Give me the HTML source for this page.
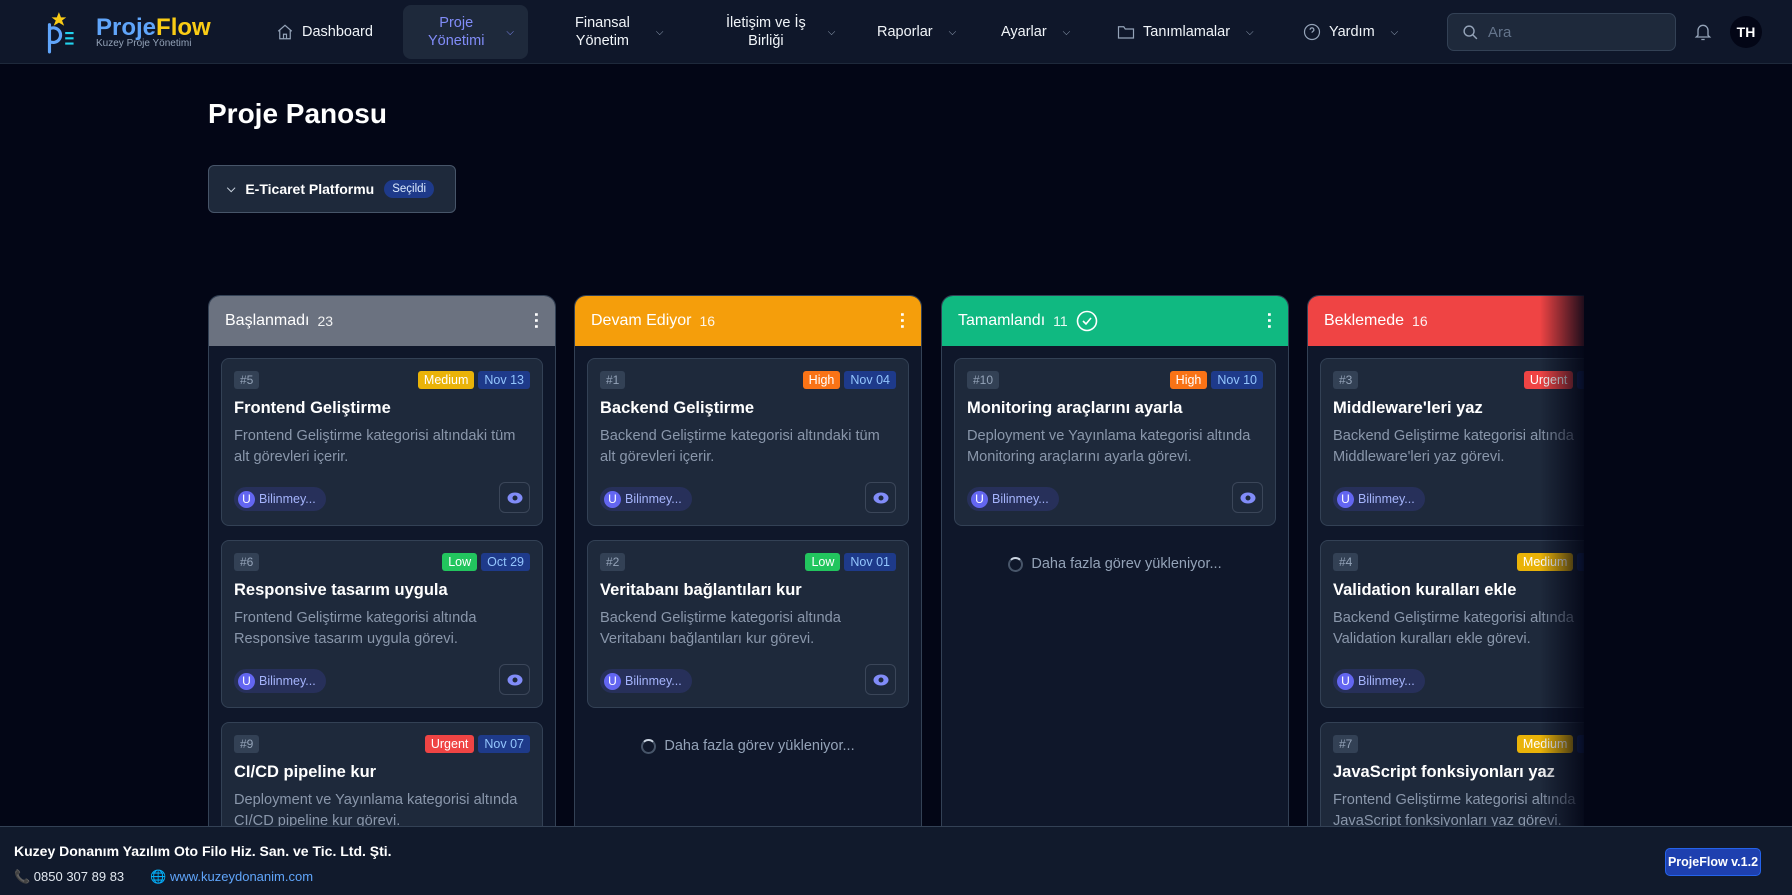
<!DOCTYPE html>
<html><head><meta charset="utf-8"><style>
*{box-sizing:border-box;margin:0;padding:0}
body{width:1792px;height:895px;overflow:hidden;background:#030616;font-family:"Liberation Sans","DejaVu Sans",sans-serif;color:#e5e7eb;position:relative}
.nav{position:absolute;left:0;top:0;width:1792px;height:64px;background:#0f172a;border-bottom:1px solid #1e293b}
.ni{position:absolute;top:0;height:64px;display:flex;align-items:center;font-size:14.5px;color:#f1f5f9;gap:8px}
.two{text-align:center;line-height:18px}
.title{position:absolute;left:208px;top:98px;font-size:28px;font-weight:bold;color:#fff}
.dd{position:absolute;left:208px;top:165px;width:248px;height:48px;border:1px solid #475569;border-radius:6px;background:#1e293b;display:flex;align-items:center;padding-left:18px;gap:10px;font-size:14px;font-weight:bold;color:#fff}
.sel{background:#1e3a8a;color:#dbeafe;font-size:11.5px;padding:3px 8px;border-radius:10px;font-weight:normal}
.board{position:absolute;left:208px;top:295px;width:1376px;height:540px;overflow:hidden}
.col{position:absolute;top:0;width:348px;height:560px;background:#0f172a;border:1px solid #334155;border-radius:12px 12px 0 0;overflow:hidden}
.ch{height:50px;display:flex;align-items:center;padding:0 16px;font-size:16px;color:#fff;gap:8px}
.ch .n{font-size:14px;opacity:.9}
.dots{margin-left:auto;font-size:18px;font-weight:bold;line-height:6px;writing-mode:vertical-lr}
.card{margin:12px 12px 0;height:168px;background:#1e293b;border:1px solid #334155;border-radius:8px;padding:12px 12px;position:relative}
.card+.card{margin-top:14px}
.id{display:inline-block;background:#334155;color:#94a3b8;font-size:12px;padding:2px 6px;border-radius:3px}
.tags{position:absolute;right:12px;top:12px;display:flex;gap:4px}
.tg{font-size:12.5px;padding:2px 6px;border-radius:3px;color:#fff}
.dt{background:#1e3a8a;color:#93c5fd}
.ct{font-size:16.5px;font-weight:bold;color:#fff;margin-top:10px}
.cd{font-size:14.6px;color:#8a97ab;line-height:21px;margin-top:8px;height:42px}
.us{position:absolute;left:12px;bottom:14px;background:#27305a;border-radius:12px;height:24px;padding:0 10px 0 4px;display:flex;align-items:center;gap:4px;font-size:12.5px;color:#a5b4fc}
.us b{width:17px;height:17px;border-radius:50%;background:#6366f1;color:#fff;font-size:12px;display:flex;align-items:center;justify-content:center;font-weight:normal}
.eye{position:absolute;right:12px;bottom:12px;width:31px;height:31px;border:1px solid #3b4659;border-radius:6px;display:flex;align-items:center;justify-content:center}
.load{text-align:center;margin-top:30px;font-size:14.5px;color:#94a3b8;display:flex;justify-content:center;align-items:center;gap:8px}
.spin{width:15px;height:15px;border:2px solid #475569;border-top-color:#cbd5e1;border-radius:50%}
.fade{position:absolute;left:1540px;top:295px;width:50px;height:540px;background:linear-gradient(90deg,rgba(3,6,22,0),#030616)}
.foot{position:absolute;left:0;top:826px;width:1792px;height:69px;background:#111a2c;border-top:1px solid #334155}
</style></head><body>
<div class="nav">
 <div class="ni" style="left:44px;gap:12px">
  <svg width="34" height="44" viewBox="0 0 30 42"><polygon points="13,2 15,7 20,7 16,10 18,15 13,12 8,15 10,10 6,7 11,7" fill="#facc15"/><path d="M4 14v26M4 18a7 7 0 1 1 0 12" stroke="#60a5fa" stroke-width="3" fill="none" stroke-linecap="round"/><path d="M19 22h8M19 27h8M19 32h8" stroke="#22d3ee" stroke-width="2"/></svg>
  <div style="margin-left:6px"><div style="font-size:24px;font-weight:bold;line-height:25px"><span style="color:#60a5fa">Proje</span><span style="color:#facc15">Flow</span></div><div style="font-size:10px;color:#94a3b8;margin-top:-2px">Kuzey Proje Yönetimi</div></div>
 </div>
 <div class="ni" style="left:276px"><svg width="18" height="18" viewBox="0 0 24 24" fill="none" stroke="#94a3b8" stroke-width="1.6"><path d="M3 11l9-8 9 8M5 9v12h14V9M10 21v-6h4v6"/></svg>Dashboard</div>
 <div style="position:absolute;left:403px;top:5px;width:125px;height:54px;background:#1e293b;border-radius:8px"></div>
 <div class="ni" style="left:428px;color:#818cf8"><div class="two">Proje<br>Yönetimi</div><span style="margin-left:14px;font-size:10px">⌵</span></div>
 <div class="ni" style="left:575px"><div class="two">Finansal<br>Yönetim</div><span style="margin-left:18px;color:#94a3b8;font-size:10px">⌵</span></div>
 <div class="ni" style="left:726px"><div class="two">İletişim ve İş<br>Birliği</div><span style="margin-left:14px;color:#94a3b8;font-size:10px">⌵</span></div>
 <div class="ni" style="left:877px">Raporlar<span style="margin-left:8px;color:#94a3b8;font-size:10px">⌵</span></div>
 <div class="ni" style="left:1001px">Ayarlar<span style="margin-left:8px;color:#94a3b8;font-size:10px">⌵</span></div>
 <div class="ni" style="left:1117px"><svg width="18" height="16" viewBox="0 0 24 20" fill="none" stroke="#94a3b8" stroke-width="1.6"><path d="M2 3h7l2 3h11v12H2z"/></svg>Tanımlamalar<span style="margin-left:8px;color:#94a3b8;font-size:10px">⌵</span></div>
 <div class="ni" style="left:1303px"><svg width="18" height="18" viewBox="0 0 24 24" fill="none" stroke="#94a3b8" stroke-width="1.6"><circle cx="12" cy="12" r="10"/><path d="M9.5 9a2.5 2.5 0 1 1 3.5 2.3c-.7.4-1 1-1 1.7M12 17h.01"/></svg>Yardım<span style="margin-left:8px;color:#94a3b8;font-size:10px">⌵</span></div>
 <div style="position:absolute;left:1447px;top:13px;width:229px;height:38px;border:1px solid #334155;border-radius:7px;background:#1e293b;display:flex;align-items:center;padding-left:14px;gap:9px;color:#64748b;font-size:15px"><svg width="17" height="17" viewBox="0 0 24 24" fill="none" stroke="#94a3b8" stroke-width="2"><circle cx="10" cy="10" r="7"/><path d="M15 15l6 6"/></svg>Ara</div>
 <svg style="position:absolute;left:1693px;top:22px" width="20" height="20" viewBox="0 0 24 24" fill="none" stroke="#94a3b8" stroke-width="1.6"><path d="M6 16V10a6 6 0 0 1 12 0v6l2 2H4zM10 21h4"/></svg>
 <div style="position:absolute;left:1730px;top:16px;width:32px;height:32px;border-radius:50%;background:#030616;color:#fff;font-size:14px;font-weight:bold;display:flex;align-items:center;justify-content:center">TH</div>
</div>
<div class="title">Proje Panosu</div>
<div class="dd"><span style="font-size:11px;color:#cbd5e1">⌵</span>E-Ticaret Platformu<span class="sel">Seçildi</span></div>
<div class="board">
 <div class="col" style="left:0"><div class="ch" style="background:#6b7280">Başlanmadı <span class="n">23</span><span class="dots">···</span></div>
  <div class="card"><span class="id">#5</span><div class="tags"><span class="tg" style="background:#eab308">Medium</span><span class="tg dt">Nov 13</span></div><div class="ct">Frontend Geliştirme</div><div class="cd">Frontend Geliştirme kategorisi altındaki tüm alt görevleri içerir.</div><div class="us"><b>U</b>Bilinmey...</div><div class="eye"><svg width="16" height="12" viewBox="0 0 16 12"><ellipse cx="8" cy="6" rx="7.5" ry="5.5" fill="#818cf8"/><circle cx="8" cy="6" r="2.5" fill="#1e293b"/></svg></div></div>
  <div class="card"><span class="id">#6</span><div class="tags"><span class="tg" style="background:#22c55e">Low</span><span class="tg dt">Oct 29</span></div><div class="ct">Responsive tasarım uygula</div><div class="cd">Frontend Geliştirme kategorisi altında Responsive tasarım uygula görevi.</div><div class="us"><b>U</b>Bilinmey...</div><div class="eye"><svg width="16" height="12" viewBox="0 0 16 12"><ellipse cx="8" cy="6" rx="7.5" ry="5.5" fill="#818cf8"/><circle cx="8" cy="6" r="2.5" fill="#1e293b"/></svg></div></div>
  <div class="card"><span class="id">#9</span><div class="tags"><span class="tg" style="background:#ef4444">Urgent</span><span class="tg dt">Nov 07</span></div><div class="ct">CI/CD pipeline kur</div><div class="cd">Deployment ve Yayınlama kategorisi altında CI/CD pipeline kur görevi.</div></div>
 </div>
 <div class="col" style="left:366px"><div class="ch" style="background:#f59e0b">Devam Ediyor <span class="n">16</span><span class="dots">···</span></div>
  <div class="card"><span class="id">#1</span><div class="tags"><span class="tg" style="background:#f97316">High</span><span class="tg dt">Nov 04</span></div><div class="ct">Backend Geliştirme</div><div class="cd">Backend Geliştirme kategorisi altındaki tüm alt görevleri içerir.</div><div class="us"><b>U</b>Bilinmey...</div><div class="eye"><svg width="16" height="12" viewBox="0 0 16 12"><ellipse cx="8" cy="6" rx="7.5" ry="5.5" fill="#818cf8"/><circle cx="8" cy="6" r="2.5" fill="#1e293b"/></svg></div></div>
  <div class="card"><span class="id">#2</span><div class="tags"><span class="tg" style="background:#22c55e">Low</span><span class="tg dt">Nov 01</span></div><div class="ct">Veritabanı bağlantıları kur</div><div class="cd">Backend Geliştirme kategorisi altında Veritabanı bağlantıları kur görevi.</div><div class="us"><b>U</b>Bilinmey...</div><div class="eye"><svg width="16" height="12" viewBox="0 0 16 12"><ellipse cx="8" cy="6" rx="7.5" ry="5.5" fill="#818cf8"/><circle cx="8" cy="6" r="2.5" fill="#1e293b"/></svg></div></div>
  <div class="load"><span class="spin"></span>Daha fazla görev yükleniyor...</div>
 </div>
 <div class="col" style="left:733px"><div class="ch" style="background:#10b981">Tamamlandı <span class="n">11</span><svg width="22" height="22" viewBox="0 0 22 22" fill="none" stroke="#fff" stroke-width="1.6"><circle cx="11" cy="11" r="9.5"/><path d="M7 11l3 3 5-6"/></svg><span class="dots">···</span></div>
  <div class="card"><span class="id">#10</span><div class="tags"><span class="tg" style="background:#f97316">High</span><span class="tg dt">Nov 10</span></div><div class="ct">Monitoring araçlarını ayarla</div><div class="cd">Deployment ve Yayınlama kategorisi altında Monitoring araçlarını ayarla görevi.</div><div class="us"><b>U</b>Bilinmey...</div><div class="eye"><svg width="16" height="12" viewBox="0 0 16 12"><ellipse cx="8" cy="6" rx="7.5" ry="5.5" fill="#818cf8"/><circle cx="8" cy="6" r="2.5" fill="#1e293b"/></svg></div></div>
  <div class="load"><span class="spin"></span>Daha fazla görev yükleniyor...</div>
 </div>
 <div class="col" style="left:1099px"><div class="ch" style="background:#ef4444">Beklemede <span class="n">16</span></div>
  <div class="card"><span class="id">#3</span><div class="tags"><span class="tg" style="background:#ef4444">Urgent</span><span class="tg dt">Nov 09</span></div><div class="ct">Middleware'leri yaz</div><div class="cd">Backend Geliştirme kategorisi altında Middleware'leri yaz görevi.</div><div class="us"><b>U</b>Bilinmey...</div></div>
  <div class="card"><span class="id">#4</span><div class="tags"><span class="tg" style="background:#eab308">Medium</span><span class="tg dt">Nov 02</span></div><div class="ct">Validation kuralları ekle</div><div class="cd">Backend Geliştirme kategorisi altında Validation kuralları ekle görevi.</div><div class="us"><b>U</b>Bilinmey...</div></div>
  <div class="card"><span class="id">#7</span><div class="tags"><span class="tg" style="background:#eab308">Medium</span><span class="tg dt">Nov 05</span></div><div class="ct">JavaScript fonksiyonları yaz</div><div class="cd">Frontend Geliştirme kategorisi altında JavaScript fonksiyonları yaz görevi.</div></div>
 </div>
</div>
<div class="fade"></div>
<div class="foot">
 <div style="position:absolute;left:14px;top:16px;font-size:14px;font-weight:bold;color:#fff">Kuzey Donanım Yazılım Oto Filo Hiz. San. ve Tic. Ltd. Şti.</div>
 <div style="position:absolute;left:14px;top:42px;font-size:13px;color:#e2e8f0;display:flex;gap:26px"><span>📞 0850 307 89 83</span><span style="color:#60a5fa">🌐 www.kuzeydonanim.com</span></div>
 <div style="position:absolute;left:1665px;top:21px;width:96px;height:28px;background:#1e40af;border:1px solid #2563eb;border-radius:5px;color:#fff;font-size:12.5px;font-weight:bold;display:flex;align-items:center;justify-content:center">ProjeFlow v.1.2</div>
</div>
</body></html>
